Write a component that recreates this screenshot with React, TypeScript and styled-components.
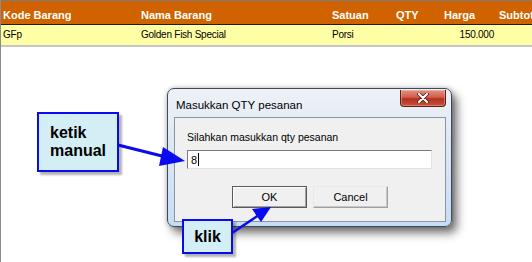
import styled, { createGlobalStyle } from 'styled-components'

const GlobalStyle = createGlobalStyle`
  html, body {
    margin: 0;
    padding: 0;
    background: #ffffff;
  }
`

const Page = styled.div`
  position: relative;
  width: 532px;
  height: 262px;
  overflow: hidden;
  box-sizing: border-box;
  border-left: 1px solid #8c8c8c;
  border-top: 1px solid #7c7c7c;
  background: #ffffff;
  font-family: 'Liberation Sans', Arial, sans-serif;
`

const GridRow = styled.div`
  display: grid;
  grid-template-columns: 138px 191px 64px 48px 55px 1fr;
`

const HeaderRow = styled(GridRow)`
  height: 23px;
  background: #d06300;
  border-bottom: 1px solid #1c1c1c;
`

const DataRow = styled(GridRow)`
  height: 20px;
  background: #ffffa6;
  border-bottom: 2px solid #c6c6c6;
`

const HeadCell = styled.div`
  padding: 7px 2px 0;
  color: #ffffff;
  font-weight: bold;
  font-size: 11px;
  line-height: 14px;
  white-space: nowrap;
  overflow: hidden;
`

const Cell = styled.div<{ $right?: boolean }>`
  padding: 4px ${({ $right }) => ($right ? '3px' : '2px')} 0 2px;
  text-align: ${({ $right }) => ($right ? 'right' : 'left')};
  color: #000000;
  font-size: 10px;
  letter-spacing: -0.25px;
  line-height: 12px;
  white-space: nowrap;
`

const Dialog = styled.div`
  position: absolute;
  left: 166px;
  top: 87px;
  width: 285px;
  height: 139px;
  box-sizing: border-box;
  display: flex;
  flex-direction: column;
  padding: 0 5px 4px 6px;
  border: 1px solid #3b4a5c;
  border-radius: 7px;
  background: linear-gradient(to bottom, #eef2f7 0%, #dfe9f4 35%, #c7ddf4 100%);
  box-shadow: 5px 6px 10px rgba(0, 0, 0, 0.55), 0 0 5px rgba(0, 0, 0, 0.25);
`

const TitleBar = styled.div`
  display: flex;
  justify-content: space-between;
  align-items: flex-start;
  height: 28px;
  padding-left: 2px;
`

const Title = styled.div`
  padding-top: 9px;
  font-size: 11.5px;
  line-height: 14px;
  color: #000000;
`

const CloseBtn = styled.div`
  margin-top: 1px;
  width: 46px;
  height: 17px;
  box-sizing: border-box;
  display: flex;
  align-items: center;
  justify-content: center;
  border: 1px solid #5e1d14;
  border-top: none;
  border-radius: 0 0 4px 4px;
  background: linear-gradient(to bottom, #e39283 0%, #cf5d4a 45%, #b3301e 55%, #c9523c 100%);
  box-shadow: inset 0 0 0 1px rgba(255, 220, 210, 0.35);
`

const Panel = styled.div`
  flex: 1;
  display: flex;
  flex-direction: column;
  padding: 13px 0 0 12px;
  background: #f0f0f0;
  border: 1px solid #8a95a3;
`

const Prompt = styled.div`
  font-size: 10.5px;
  line-height: 13px;
  color: #000000;
`

const Input = styled.div`
  margin-top: 6px;
  width: 245px;
  height: 19px;
  box-sizing: border-box;
  display: flex;
  align-items: center;
  padding-left: 3px;
  background: #ffffff;
  border-top: 1px solid #7a7a7a;
  border-left: 1px solid #7a7a7a;
  border-right: 1px solid #e2e2e2;
  border-bottom: 1px solid #e2e2e2;
  font-size: 11px;
  color: #000000;
`

const Caret = styled.span`
  display: inline-block;
  width: 1px;
  height: 13px;
  margin-left: 1px;
  background: #000000;
`

const Buttons = styled.div`
  display: flex;
  justify-content: center;
  gap: 6px;
  margin-top: 17px;
  padding-right: 12px;
`

const Button = styled.div<{ $default?: boolean }>`
  width: 75px;
  height: 22px;
  box-sizing: border-box;
  display: flex;
  align-items: center;
  justify-content: center;
  background: #f0f0f0;
  font-size: 11px;
  color: #000000;
  border: 1px solid ${({ $default }) => ($default ? '#5a5a5a' : '#a0a0a0')};
  border-top-color: ${({ $default }) => ($default ? '#5a5a5a' : '#e8e8e8')};
  border-left-color: ${({ $default }) => ($default ? '#5a5a5a' : '#e8e8e8')};
  box-shadow: ${({ $default }) =>
    $default ? 'inset 1px 1px 0 #ffffff, inset -1px -1px 0 #a0a0a0' : 'inset -1px -1px 0 #c8c8c8'};
`

const Callout = styled.div<{ $left: number; $top: number; $w: number; $h: number; $center?: boolean }>`
  position: absolute;
  left: ${({ $left }) => $left}px;
  top: ${({ $top }) => $top}px;
  width: ${({ $w }) => $w}px;
  height: ${({ $h }) => $h}px;
  box-sizing: border-box;
  display: flex;
  flex-direction: column;
  justify-content: center;
  align-items: ${({ $center }) => ($center ? 'center' : 'flex-start')};
  padding-left: ${({ $center }) => ($center ? 0 : 11)}px;
  border: 2px solid #0a0af0;
  background: #d3eef4;
  box-shadow: 3px 3px 2px rgba(0, 0, 0, 0.3);
  font-weight: bold;
  font-size: 16px;
  line-height: 18px;
  color: #000000;
`

const Arrows = styled.svg`
  position: absolute;
  left: -1px;
  top: -1px;
  pointer-events: none;
`

const columns = ['Kode Barang', 'Nama Barang', 'Satuan', 'QTY', 'Harga', 'Subtotal']

export default function App() {
  return (
    <>
      <GlobalStyle />
      <Page>
        <HeaderRow>
          {columns.map((c) => (
            <HeadCell key={c}>{c}</HeadCell>
          ))}
        </HeaderRow>
        <DataRow>
          <Cell>GFp</Cell>
          <Cell>Golden Fish Special</Cell>
          <Cell>Porsi</Cell>
          <Cell />
          <Cell $right>150.000</Cell>
          <Cell />
        </DataRow>

        <Dialog>
          <TitleBar>
            <Title>Masukkan QTY pesanan</Title>
            <CloseBtn>
              <svg width="12" height="10" viewBox="0 0 12 10">
                <path d="M2 1 L10 9 M10 1 L2 9" stroke="#4a140e" strokeWidth="3.6" strokeLinecap="round" />
                <path d="M2 1 L10 9 M10 1 L2 9" stroke="#ffffff" strokeWidth="2.2" strokeLinecap="round" />
              </svg>
            </CloseBtn>
          </TitleBar>
          <Panel>
            <Prompt>Silahkan masukkan qty pesanan</Prompt>
            <Input>
              8<Caret />
            </Input>
            <Buttons>
              <Button $default>OK</Button>
              <Button>Cancel</Button>
            </Buttons>
          </Panel>
        </Dialog>

        <Callout $left={36} $top={111} $w={82} $h={60}>
          <span>ketik</span>
          <span>manual</span>
        </Callout>
        <Callout $left={181} $top={218} $w={51} $h={35} $center>
          klik
        </Callout>

        <Arrows width="532" height="262" viewBox="0 0 532 262">
          <line x1="118" y1="145" x2="166" y2="157" stroke="#0a0af0" strokeWidth="3" />
          <polygon points="185,161 163,147 159,166" fill="#0a0af0" />
          <line x1="232" y1="233" x2="259" y2="215" stroke="#0a0af0" strokeWidth="2.5" />
          <polygon points="271,207 261,222 252,209" fill="#0a0af0" />
        </Arrows>
      </Page>
    </>
  )
}
